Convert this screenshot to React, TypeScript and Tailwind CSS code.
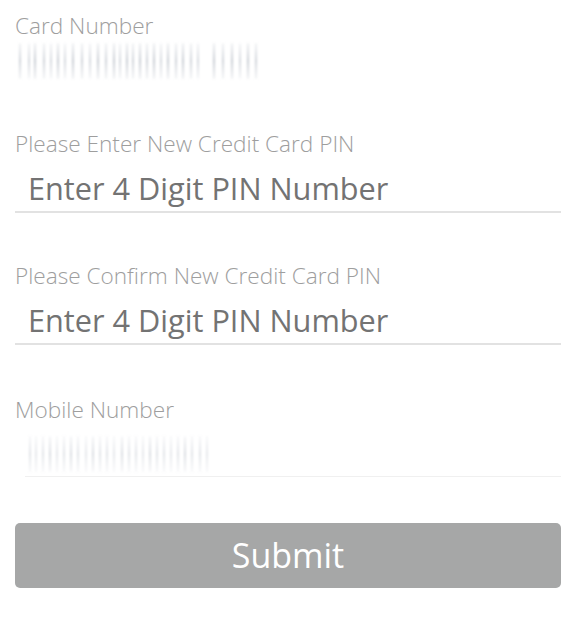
import type { ReactNode } from 'react';

const FONT = { fontFamily: '"Open Sans", Lato, sans-serif' };

// blurred, redacted digit streaks: [left offset px, opacity]
const cardBars: [number, number][] = [
  [0, 0.45], [9, 0.4], [15, 0.5], [24, 0.45], [31, 0.4], [38, 0.5], [45, 0.4], [53, 0.5],
  [62, 0.45], [70, 0.4], [78, 0.5], [86, 0.45], [94, 0.5], [100, 0.4], [107, 0.5], [113, 0.45],
  [120, 0.5], [127, 0.45], [134, 0.5], [141, 0.4], [148, 0.5], [156, 0.45], [163, 0.5],
  [171, 0.45], [178, 0.4], [194, 0.5], [203, 0.45], [212, 0.5], [220, 0.4], [228, 0.5],
  [236, 0.45],
];

const mobileBars: [number, number][] = [
  [0, 0.3], [6, 0.25], [13, 0.3], [20, 0.35], [27, 0.25], [34, 0.3], [41, 0.35], [48, 0.3],
  [56, 0.25], [63, 0.35], [70, 0.3], [77, 0.3], [84, 0.25], [92, 0.35], [99, 0.3], [106, 0.3],
  [113, 0.25], [120, 0.35], [127, 0.3], [134, 0.3], [141, 0.25], [148, 0.3], [155, 0.35],
  [162, 0.3], [170, 0.3], [177, 0.25],
];

function Redacted({ bars, width }: { bars: [number, number][]; width: number }) {
  return (
    <div className="relative h-[44px] blur-[1.2px]" style={{ width }}>
      {bars.map(([left, op]) => (
        <span
          key={left}
          className="absolute top-[4px] h-[36px] w-[2px] rounded-full bg-gradient-to-b from-gray-200 via-gray-400 to-gray-200"
          style={{ left, opacity: op }}
        />
      ))}
    </div>
  );
}

function Label({ children }: { children: ReactNode }) {
  return <div className="text-[22.6px] font-light leading-[24px] text-[#9e9e9e]">{children}</div>;
}

function PinField({ label }: { label: string }) {
  return (
    <div>
      <Label>{label}</Label>
      <input
        type="password"
        placeholder="Enter 4 Digit PIN Number"
        className="mt-[13px] w-full border-b-2 border-[#e2e2e2] bg-transparent pb-[4px] pl-[13px] text-[30.7px] leading-[38px] outline-none placeholder:text-[#737373]"
        style={FONT}
      />
    </div>
  );
}

export default function App() {
  return (
    <div className="min-h-[627px] w-[576px] bg-white px-[15px] pt-[14px]" style={FONT}>
      <Label>Card Number</Label>
      <div className="mt-[1px] pl-[4px]">
        <Redacted bars={cardBars} width={240} />
      </div>

      <div className="mt-[49px]">
        <PinField label="Please Enter New Credit Card PIN" />
      </div>

      <div className="mt-[51px]">
        <PinField label="Please Confirm New Credit Card PIN" />
      </div>

      <div className="mt-[53px]">
        <Label>Mobile Number</Label>
        <div className="mt-[10px] ml-[10px] border-b border-[#f0f0f0]">
          <div className="pl-[4px]">
            <Redacted bars={mobileBars} width={182} />
          </div>
        </div>
      </div>

      <button
        type="button"
        className="mt-[46px] flex h-[65px] w-[546px] items-center justify-center rounded-[5px] bg-[#a6a7a7] text-[34px] text-white"
        style={FONT}
      >
        Submit
      </button>
    </div>
  );
}
